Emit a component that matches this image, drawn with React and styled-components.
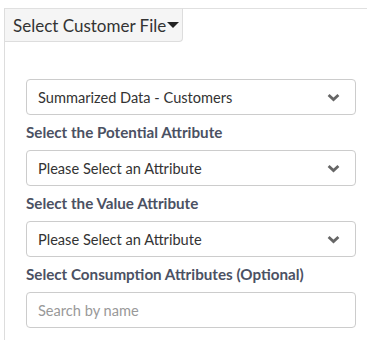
import React from 'react';
import styled, { createGlobalStyle } from "styled-components";

const Global = createGlobalStyle`
  body {
    margin: 0;
    background: #fff;
    font-family: "Lato", "Liberation Sans", sans-serif;
  }
`;

const Page = styled.div`
  padding: 8px 0 0 4px;
`;

const TabBar = styled.div`
  display: flex;
  border-top: 1px solid #e0e0e0;
`;

const Tab = styled.div`
  display: flex;
  align-items: center;
  height: 32px;
  padding: 0 3px 0 8px;
  margin-top: -1px;
  background: #f5f5f5;
  border: 1px solid #ddd;
  border-top-color: #e0e0e0;
  border-radius: 0 0 4px 0;
  font-size: 17px;
  color: #333;
`;

const Caret = styled.span`
  width: 0;
  height: 0;
  margin-left: 1px;
  border-left: 6px solid transparent;
  border-right: 6px solid transparent;
  border-top: 6px solid #222;
`;

const Panel = styled.div`
  border-left: 1px solid #ddd;
  padding: 37px 11px 12px 21px;
  display: flex;
  flex-direction: column;
`;

const Select = styled.div`
  display: flex;
  align-items: center;
  justify-content: space-between;
  height: 36px;
  box-sizing: border-box;
  border: 1px solid #ccc;
  border-radius: 4px;
  padding: 0 15px 0 11px;
  font-size: 14.6px;
  color: ${p => (p.$placeholder ? "#999" : "#333")};
`;

const Chevron = () => (
  <svg width="13" height="9" viewBox="0 0 13 9">
    <path d="M1.6 2 L6.5 6.6 L11.4 2" fill="none" stroke="#666" strokeWidth="2.8" />
  </svg>
);

const Label = styled.div`
  font-size: 15.2px;
  font-weight: 700;
  color: #4b5163;
  line-height: 20px;
  padding: 7px 0 8px;
`;

const App = () => {
  return (
    <Page>
      <Global />
      <TabBar>
        <Tab>Select Customer File<Caret /></Tab>
      </TabBar>
      <Panel>
        <Select>Summarized Data - Customers<Chevron /></Select>
        <Label>Select the Potential Attribute</Label>
        <Select>Please Select an Attribute<Chevron /></Select>
        <Label>Select the Value Attribute</Label>
        <Select>Please Select an Attribute<Chevron /></Select>
        <Label>Select Consumption Attributes (Optional)</Label>
        <Select $placeholder>Search by name</Select>
      </Panel>
    </Page>
  );
};

export default App;
